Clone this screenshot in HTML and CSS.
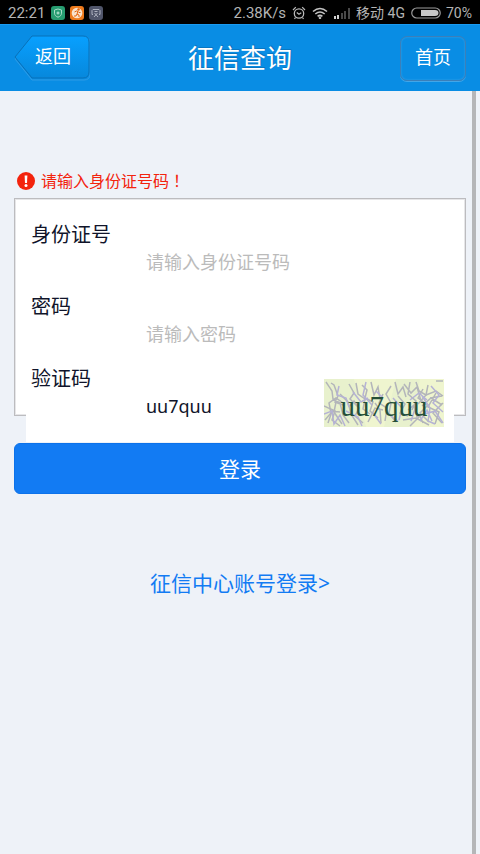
FILE: index.html
```html
<!DOCTYPE html>
<html lang="zh-CN">
<head>
<meta charset="utf-8">
<meta name="viewport" content="width=device-width, initial-scale=1">
<title>征信查询</title>
<link rel="stylesheet" href="styles.css">
</head>
<body>
<div class="status">
  <span class="clock">22:21</span>
  <svg class="app" viewBox="0 0 14 14" aria-hidden="true"><rect width="14" height="14" rx="3" fill="#279c70"/><path d="M7 3l3.500 1v3.200c0 2-1.400 3.200-3.500 4-2.100-.8-3.500-2-3.500-4V4z" fill="none" stroke="#a9dcc7"/><path d="M7 5.500v3M5.500 7h3" stroke="#c8eadc"/></svg>
  <svg class="app" viewBox="0 0 14 14" aria-hidden="true"><rect width="14" height="14" rx="3" fill="#ee7a1c"/><circle cx="7" cy="7" r="5.300" fill="#f9e2cc"/><circle cx="8.500" cy="3.500" r="1.200" fill="#e4640d"/><path d="M4.500 6l2-1 1.500.5-1 2.500 2 1v2M7 8l-1 2H4M8 5.500l1 1h1.500" fill="none" stroke="#e4640d"/></svg>
  <svg class="app" viewBox="0 0 14 14" aria-hidden="true"><rect width="14" height="14" rx="3" fill="#50556a"/><path d="M4 8.500H3V4.500L4 3.500h6l1 1v4h-1M5 11l3.500-4M9 11l-3.500-4M5.500 5.500h3" fill="none" stroke="#adb1bf"/></svg>
  <span class="speed">2.38K/s</span>
  <svg class="alarm" viewBox="0 0 14 14" fill="none" stroke="#b9b9b9" aria-hidden="true"><circle cx="7" cy="7.500" r="4.700" stroke-width="1.300"/><path d="M4.800 6.500L7 8.300l2.300-1.500M1 4l2.800-2.800M13 4l-2.800-2.800M3.500 11.500l-1 1.500M10.500 11.500l1 1.500" stroke-width="1.200"/></svg>
  <svg class="wifi" viewBox="0 0 16 12" fill="none" stroke="#c2c2c2" stroke-width="1.600" aria-hidden="true"><path d="M1 4.500Q8-1.500 15 4.500M3.300 7Q8 3 12.700 7M5.600 9.300Q8 7.300 10.400 9.300"/><circle cx="8" cy="10.800" r=".5"/></svg>
  <svg class="signal" viewBox="0 0 16 12" aria-hidden="true"><path d="M0 9h2v3H0zM3 8h2v4H3z" fill="#d2d2d2"/><path d="M7 6h2v6H7zM10 4h2v8h-2zM14 1h2v11h-2z" fill="#494949"/></svg>
  <span class="carrier">移动 4G</span>
  <svg class="battery" viewBox="0 0 30 12" aria-hidden="true"><rect x=".75" y="1" width="28.500" height="10" rx="5" fill="none" stroke="#9b9b9b" stroke-width="1.200"/><path d="M10 3h14q3.500 0 3.500 3t-3.500 3H10z" fill="#c8c8c8"/></svg>
  <span class="level">70%</span>
</div>
<header class="header">
  <button class="back" type="button">
    <svg class="back-shape" viewBox="0 0 76 46" preserveAspectRatio="none" aria-hidden="true"><defs><linearGradient id="g" x2="0" y2="1"><stop stop-color="#08a0ff"/><stop offset="1" stop-color="#0788dc"/></linearGradient></defs><path d="M18 2H70Q76 2 76 8V39Q76 45 70 45H18L1 24z" fill="none" stroke="#2f9ce6"/><path d="M18 1H69Q75 1 75 7V37Q75 43 69 43H18L1 22z" fill="url(#g)" stroke="#0870b8"/></svg>
    <span class="back-text">返回</span>
  </button>
  <h1 class="title">征信查询</h1>
  <button class="home" type="button">首页</button>
</header>
<main class="main">
  <div class="scrollbar"></div>
  <p class="error" role="alert">
    <svg class="error-icon" viewBox="0 0 18 18" aria-hidden="true"><circle cx="9" cy="9" r="9" fill="#f3230d"/><path d="M7.600 3.500h2.800L10 11H8z" fill="#fff"/><circle cx="9" cy="13.500" r="1.500" fill="#fff"/></svg>
    <span>请输入身份证号码<span class="mark" lang="zh-TW">！</span></span>
  </p>
  <form>
    <div class="card">
      <div class="field">
        <label class="label" for="idno">身份证号</label>
        <input class="input" id="idno" type="text" placeholder="请输入身份证号码">
      </div>
      <div class="field">
        <label class="label" for="pwd">密码</label>
        <input class="input" id="pwd" type="password" placeholder="请输入密码">
      </div>
      <div class="field field-code">
        <label class="label" for="code">验证码</label>
        <input class="input" id="code" type="text" value="uu7quu">
        <svg class="captcha" viewBox="0 0 120 48" role="img" aria-label="验证码">
          <rect width="120" height="48" fill="#eff5cf"/>
          <path d="M0 0h30l12 48H0zM72 0h24l-8 48H60z" fill="#e8f1cd"/>
          <g fill="none" stroke="#b3b5ba" stroke-width="1.500">
            <path d="M2 3l6 9 1 8 7 4 3 12 6 8M7 4l3 2 4 11-3 6 8 3M16 15l8 8 3 12 7 11M12 23l-2 10 8 12M25 5l5 9-4 6 8 8M32 4l2 11 7 5-2 10 7 5M38 6l5 5-2 8 8 4-3 9 8 7M47 3l3 13 4-8 2 12M25 28l5-6 5 7-4 8 8 7M19 24l-7-5-7 5 2 10-6 7"/>
            <path d="M51 24l5 7 1 13M59 15l-4 9 8 5-2 13M67 7l-5 8 5 9-2 10 7 9M71 3l3 12 5-7 3 10M74 17l7 8-5 9 8 3M86 3l-2 12 8 7-4 9M92 3l3 9 7 4-8 9M80 5l7 9 6-6 4 14 8 5M84 31l6-5 3 12 9-4M99 10l-5 9 10 7-8 8 9 9"/>
            <path d="M112 2h7M104 6l-2 10 10-4 7 5M106 19l12-2M98 27l9-8 11 7M112 14l-8 14 11 5-4 12M119 24l-10 10 9 10M79 41l13-2 13 7M86 47l10-10 3 7M0 27l11 5-3 9 8 6M4 44l4-12 8 1M44 43l7-14 8 2"/>
          </g>
          <g fill="none" stroke="#b5b2d5" stroke-width="1.500">
            <path d="M0 35l8-3 2 13 6-9 5 11M15 7l-2 9 9 3 3 9M29 13l8 10 7-4M22 32l12 6 4 9M42 3l-3 13 9 10M52 12l7 7M49 34l8 11M69 19l9 10-3 12M86 21l9-7 8 7M91 30l-4 12M98 17l8 12-2 13 7 3M107 7l8 9-6 8 10 9M101 35l10-3 8 12M64 35l10 7M96 42l7-11 5 11"/>
          </g>
          <text class="captcha-text" x="60" y="37" text-anchor="middle">uu7quu</text>
        </svg>
      </div>
    </div>
    <button class="login" type="submit">登录</button>
  </form>
  <a class="alt" href="#">征信中心账号登录&gt;</a>
</main>
</body>
</html>
```
FILE: styles.css
```css
* { box-sizing: border-box; }

body {
  margin: 0;
  min-height: 100vh;
  display: flex;
  flex-direction: column;
  background: #eef2f8;
  color: #10142a;
  font-family: "Noto Sans", "Noto Sans CJK SC", sans-serif;
}

button, input { font-family: inherit; }

.status {
  display: flex;
  align-items: center;
  height: 24px;
  padding: 1px 8px 0;
  background: #000;
  color: #b4b4b4;
  font: 14px/22px Roboto, "Noto Sans CJK SC", sans-serif;
}

.status svg { flex: none; }
.app { width: 14px; height: 14px; margin-left: 5px; }
.clock { margin-right: 1px; font-size: 15px; }
.speed { margin-left: auto; font-size: 15px; }
.alarm { width: 14px; height: 14px; margin-left: 6px; }
.wifi { width: 16px; height: 12px; margin-left: 6px; }
.signal { width: 16px; height: 12px; margin-left: 6px; }
.carrier { margin-left: 6px; }
.battery { width: 30px; height: 12px; margin-left: 6px; }
.level { margin-left: 5px; }

.header {
  display: grid;
  grid-template-columns: 1fr auto 1fr;
  align-items: center;
  height: 67px;
  padding: 0 14px;
  border-top: 1px solid #1a9bf2;
  background: #098de4;
  color: #fff;
}

.back {
  position: relative;
  width: 76px;
  height: 46px;
  padding: 0 0 6px 2px;
  border: 0;
  background: none;
  color: #fff;
  font-size: 18px;
}

.back-shape { position: absolute; inset: 0; width: 100%; height: 100%; }
.back-text { position: relative; }

.title {
  margin: 0;
  font-size: 26px;
  font-weight: 400;
  line-height: 36px;
  text-shadow: 1px -1px 0 #0877c2;
}

.home {
  justify-self: end;
  width: 66px;
  height: 45px;
  padding: 0 0 4px;
  border: 1px solid #3b7fb9;
  border-radius: 7px;
  background: none;
  box-shadow: 0 1px 0 #43a6e8, inset 0 0 2px #43a6e8;
  color: #fff;
  font-size: 18px;
}

.main {
  position: relative;
  flex: 1;
  padding: 79px 14px 0;
}

.scrollbar {
  position: absolute;
  top: 0;
  right: 4px;
  bottom: 0;
  width: 4px;
  background: #b5b6b8;
}

.error {
  display: flex;
  align-items: center;
  gap: 6px;
  margin: 0 0 7px 3px;
  color: #f3230d;
  font-size: 16px;
  line-height: 20px;
}

.error-icon { width: 18px; height: 18px; }
.mark { font-family: "Noto Sans CJK TC", sans-serif; }

.card {
  margin-bottom: 27px;
  padding: 24px 11px 0;
  border: 1px solid #bcbcbf;
  box-shadow: inset 0 0 0 1px #e6e6e8;
  background: #fff;
}

.field {
  display: grid;
  grid-template-columns: 115px 1fr;
  grid-template-rows: 24px 48px;
  padding-left: 5px;
}

.label {
  grid-column: 1 / 3;
  font-size: 20px;
  line-height: 24px;
}

.input {
  grid-column: 2;
  width: 100%;
  height: 30px;
  padding: 0;
  border: 0;
  outline: 0;
  background: none;
  color: #10142a;
  font-size: 18px;
}

.input::placeholder { color: #bbb; opacity: 1; }

.field-code {
  grid-template-columns: 115px 1fr 120px;
  grid-template-rows: 24px 51px;
  margin-bottom: -27px;
  padding-right: 10px;
  background: #fff;
}

.captcha {
  grid-column: 3;
  grid-row: 1 / 3;
  width: 120px;
  height: 48px;
  margin-top: 12px;
}

.captcha-text {
  font: 29px "Liberation Serif", serif;
  fill: #244f38;
}

.login {
  display: block;
  width: 100%;
  height: 51px;
  padding: 0 0 2px;
  border: 1px solid #0c72ea;
  border-radius: 6px;
  background: #127bf3;
  color: #fff;
  font-size: 21px;
}

.alt {
  display: block;
  width: fit-content;
  margin: 73px auto 0;
  color: #127bf3;
  font-size: 21px;
  line-height: 32px;
  text-decoration: none;
}
```
